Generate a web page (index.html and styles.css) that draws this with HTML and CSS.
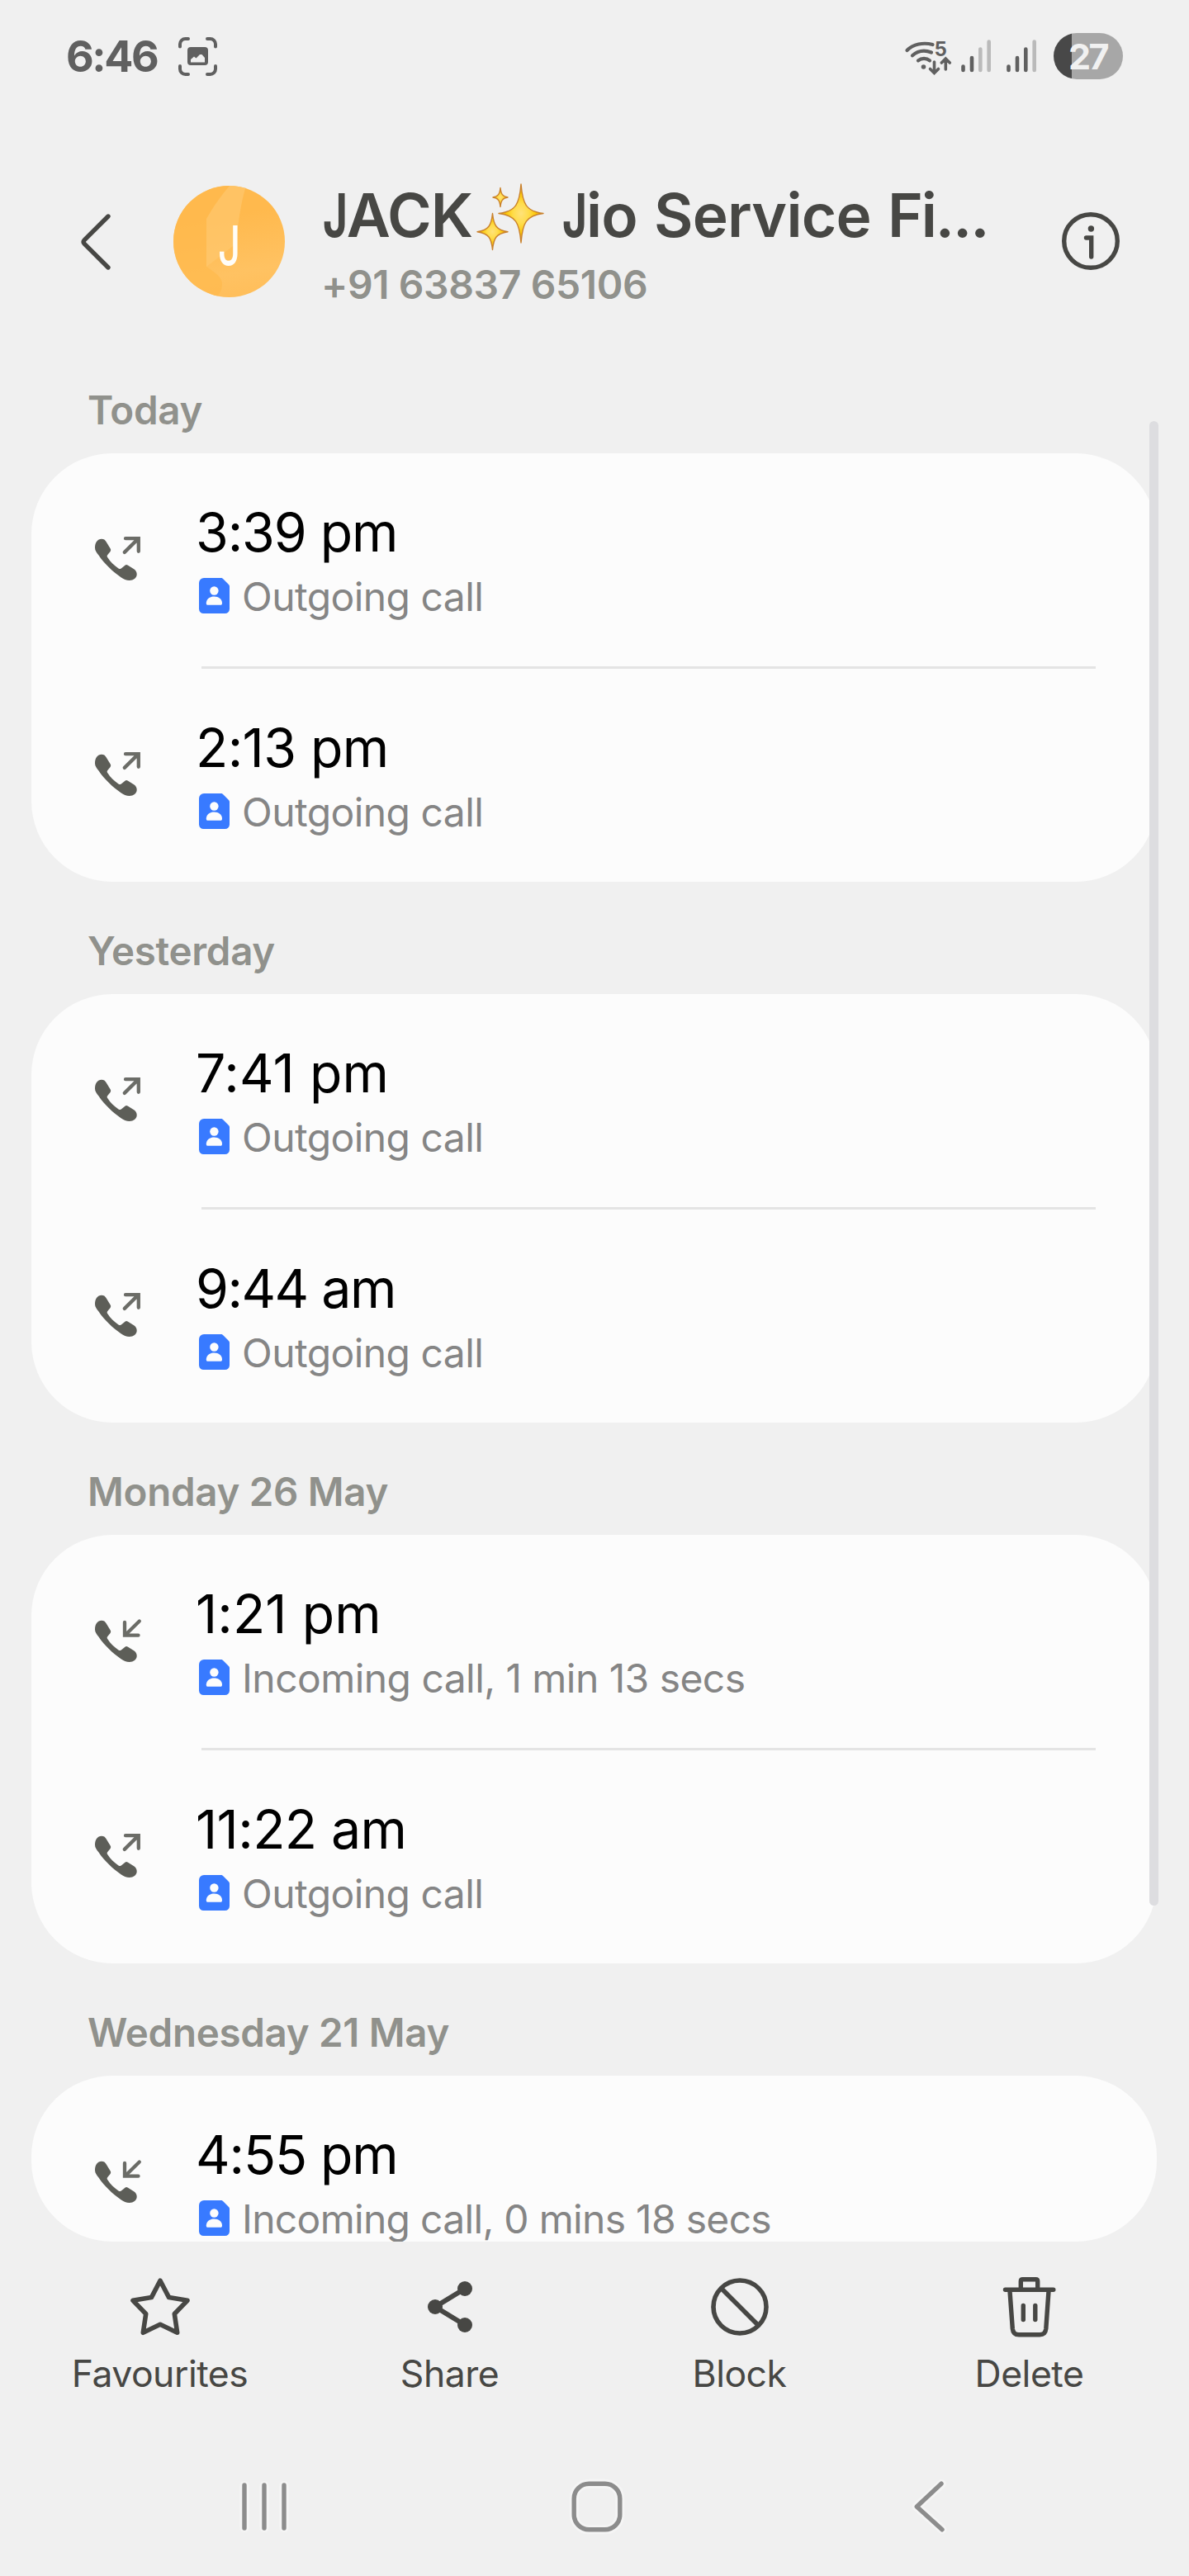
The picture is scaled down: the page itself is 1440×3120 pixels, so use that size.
FILE: index.html
```html
<!DOCTYPE html>
<html lang="en">
<head>
<meta charset="utf-8">
<title>Call history</title>
<link rel="stylesheet" href="styles.css">
</head>
<body>
<svg class="sprite" aria-hidden="true">
  <symbol id="handset" viewBox="0 0 60 60">
    <path fill="#5d5e58" d="M3 17.500C3 11 6.200 6.700 11 6.700c2.600 0 4.400 1.200 5.500 3.300l5.200 8.600c.7 1.300.6 2.200-.1 3.300l-3.300 4c-.8 1.100-.8 2-.1 3.200 3.500 5.500 8 10 13.300 13.300 1.500.9 2.700.8 3.900-.3l4-3.400c1.100-.9 2-.9 3.200-.2l7.600 4.700c2.400 1.600 3.700 3.900 3.500 6.800C53.400 54 49.700 57 44.700 57c-3.600 0-7-1.400-10.200-3.700C25 46.700 14.500 37.200 7.500 26.600 5 23 3 21 3 17.500z"/>
  </symbol>
  <symbol id="outgoing" viewBox="0 0 60 60">
    <use href="#handset"/>
    <path fill="none" stroke="#6b6c67" stroke-width="4.300" stroke-linecap="round" stroke-linejoin="miter" d="M40 6.200H55.800V21.800M38.800 22.900L55 6.900"/>
  </symbol>
  <symbol id="incoming" viewBox="0 0 60 60">
    <use href="#handset"/>
    <path fill="none" stroke="#6b6c67" stroke-width="4.300" stroke-linecap="round" stroke-linejoin="miter" d="M39 9V24.700H55.500M40 24L56.800 7.500"/>
  </symbol>
  <symbol id="contact" viewBox="0 0 37 43">
    <path fill="#387aff" d="M6 0H26.500c1.200 0 2 .4 2.800 1.200L36 8c.7.700 1 1.400 1 2.400V37.500a5.500 5.500 0 0 1-5.500 5.500H5.500A5.500 5.500 0 0 1 0 37.500V6A6 6 0 0 1 6 0z"/>
    <circle cx="18.400" cy="15.500" r="5.200" fill="#fcfcfc"/>
    <path fill="#fcfcfc" d="M8.800 30.500C8.800 25.500 13 22.500 18.400 22.500S28 25.500 28 30.500c0 1.500-.6 2.300-2 2.300H10.800c-1.400 0-2-.8-2-2.300z"/>
  </symbol>
</svg>

<div class="screen">
  <div class="status">
    <span class="clock">6:46</span>
    <svg class="capture" viewBox="0 0 47 47">
      <g fill="none" stroke="#606060" stroke-width="4" stroke-linecap="round">
        <path d="M2 11.500V8.500A6.500 6.500 0 0 1 8.500 2H12M35 2h3.500A6.500 6.500 0 0 1 45 8.500v3M45 35v3.500A6.500 6.500 0 0 1 38.500 45H35M12 45H8.500A6.500 6.500 0 0 1 2 38.500V35"/>
      </g>
      <path fill="#606060" fill-rule="evenodd" d="M15 12H32a4 4 0 0 1 4 4V30a4 4 0 0 1-4 4H15a4 4 0 0 1-4-4V16a4 4 0 0 1 4-4zM15 30.500H32V25l-3.500-4h-2.500l-4.500 4.500-2.500-2L15 27z"/>
    </svg>
    <div class="indicators">
      <svg class="wifi" viewBox="0 0 70 70">
        <g fill="none" stroke="#606060" stroke-width="4.200" stroke-linecap="round">
          <path d="M9.500 31C17 23.500 29 21 40.500 24"/>
          <path d="M16 37.300C22.500 31.500 31 30.500 39 33.500"/>
          <path d="M23 43.300C27 40 33 40 37 43.300"/>
          <path d="M42.500 45V58M37.500 53.500L42.500 58.500 47.500 53.500M56.300 54V42M51.300 46L56.300 41 61.300 46" stroke-width="3.600"/>
        </g>
        <circle cx="29.500" cy="51" r="2.800" fill="#606060"/>
        <text class="wifi-gen" x="42.500" y="38">5</text>
      </svg>
      <svg class="signal" viewBox="0 0 37 40">
        <g stroke-width="4.600" stroke-linecap="round">
          <path stroke="#606060" d="M2.500 32.500V37M13 22V37"/>
          <path stroke="#bababa" d="M23.300 11.500V37M33.700 2.500V37"/>
        </g>
      </svg>
      <svg class="signal signal-second" viewBox="0 0 37 40">
        <g stroke-width="4.600" stroke-linecap="round">
          <path stroke="#606060" d="M2.500 32.500V37M13 22V37M23.300 11.500V37"/>
          <path stroke="#bababa" d="M33.700 2.500V37"/>
        </g>
      </svg>
      <div class="battery">27</div>
    </div>
  </div>

  <header class="header">
    <svg class="back" viewBox="0 0 40 72"><path fill="none" stroke="#474744" stroke-width="5.400" stroke-linecap="round" d="M35 5L6.300 33.500Q4 36 6.300 38.500L35 67"/></svg>
    <div class="avatar">
      <svg class="avatar-art" viewBox="0 0 135 135">
        <path fill="#ffb94e" d="M0 0H68C56 14 48 26 40 40V98C52 106 58 110 59 118 59 126 57 130 52 135H0z" opacity=".75"/>
        <path fill="#ffc86e" d="M68 0H88C82 20 78 45 76 70L40 98V40C48 26 56 14 68 0z" opacity=".7"/>
      </svg>
      <span class="avatar-letter">J</span>
    </div>
    <div class="who">
      <h1 class="name">
        <span class="w-jack"><span class="j">J</span>ACK</span>
        <svg class="sparkles" viewBox="0 0 82 82" role="img" aria-label="sparkles">
          <defs>
            <radialGradient id="gold"><stop offset="0" stop-color="#ffe27a"/><stop offset=".35" stop-color="#ffdc4a"/><stop offset=".7" stop-color="#fbc400"/><stop offset="1" stop-color="#eda600"/></radialGradient>
          </defs>
          <g fill="url(#gold)" stroke="#c9812c" stroke-width="1.400" stroke-linejoin="round">
            <path d="M54 1C56 25 60 34 81 36.500 60 39 56 48 54 72 52 48 48 39 27 36.500 48 34 52 25 54 1z"/>
            <path d="M19.500 36.500C21 51 24 56.500 38 58.700 24 61 21 66 19.500 80.500 18 66 15 61 1 58.700 15 56.500 18 51 19.500 36.500z"/>
            <path d="M29 5.500C29.800 13 31.500 16 38 17 31.500 18 29.800 21 29 28.500 28.200 21 26.500 18 20 17 26.500 16 28.200 13 29 5.500z"/>
          </g>
        </svg>
        <span class="w-jio"><span class="j">J</span>io</span>
        <span class="w-service">Service</span>
        <span class="w-fi">Fi...</span>
      </h1>
      <div class="number">+91 63837 65106</div>
    </div>
    <svg class="info" viewBox="0 0 72 72">
      <g fill="none" stroke="#474744" stroke-linecap="round">
        <circle cx="36" cy="36" r="32.300" stroke-width="5.400"/>
        <path d="M30.500 32H36.700V55" stroke-width="5.400"/>
      </g>
      <circle cx="36.400" cy="21" r="3.700" fill="#474744"/>
    </svg>
  </header>

  <main class="log">
    <section class="day">
      <h2 class="day-title">Today</h2>
      <div class="card">
        <div class="call"><svg class="call-icon"><use href="#outgoing"/></svg><div class="call-text"><div class="time">3:39 pm</div><div class="detail"><svg class="contact"><use href="#contact"/></svg>Outgoing call</div></div></div>
        <div class="call"><svg class="call-icon"><use href="#outgoing"/></svg><div class="call-text"><div class="time time-semi">2:13 pm</div><div class="detail"><svg class="contact"><use href="#contact"/></svg>Outgoing call</div></div></div>
      </div>
    </section>
    <section class="day">
      <h2 class="day-title">Yesterday</h2>
      <div class="card">
        <div class="call"><svg class="call-icon"><use href="#outgoing"/></svg><div class="call-text"><div class="time time-loose">7:41 pm</div><div class="detail"><svg class="contact"><use href="#contact"/></svg>Outgoing call</div></div></div>
        <div class="call"><svg class="call-icon"><use href="#outgoing"/></svg><div class="call-text"><div class="time time-tight">9:44 am</div><div class="detail"><svg class="contact"><use href="#contact"/></svg>Outgoing call</div></div></div>
      </div>
    </section>
    <section class="day">
      <h2 class="day-title">Monday 26 May</h2>
      <div class="card">
        <div class="call"><svg class="call-icon"><use href="#incoming"/></svg><div class="call-text"><div class="time time-loose">1:21 pm</div><div class="detail"><svg class="contact"><use href="#contact"/></svg>Incoming call, 1 min 13 secs</div></div></div>
        <div class="call"><svg class="call-icon"><use href="#outgoing"/></svg><div class="call-text"><div class="time time-semi">11:22 am</div><div class="detail"><svg class="contact"><use href="#contact"/></svg>Outgoing call</div></div></div>
      </div>
    </section>
    <section class="day">
      <h2 class="day-title">Wednesday 21 May</h2>
      <div class="card card-cut">
        <div class="call"><svg class="call-icon"><use href="#incoming"/></svg><div class="call-text"><div class="time">4:55 pm</div><div class="detail detail-tight"><svg class="contact"><use href="#contact"/></svg>Incoming call, 0 mins 18 secs</div></div></div>
      </div>
    </section>
    <div class="scrollbar"></div>
  </main>

  <footer class="actions">
    <div class="action">
      <svg class="action-icon" viewBox="0 0 80 80"><path fill="none" stroke="#474744" stroke-width="5.600" stroke-linejoin="round" d="M40 8.200L50.600 28.600 73 32.300 57.300 48.500 60.700 71.300 40 61.300 19.300 71.300 22.700 48.500 7 32.300 29.400 28.600z"/></svg>
      <span>Favourites</span>
    </div>
    <div class="action">
      <svg class="action-icon" viewBox="0 0 80 80"><path fill="none" stroke="#474744" stroke-width="6" d="M58 18L22 40 58 62"/><g fill="#474744"><circle cx="22" cy="40" r="9"/><circle cx="58" cy="18" r="9"/><circle cx="58" cy="62" r="9"/></g></svg>
      <span>Share</span>
    </div>
    <div class="action">
      <svg class="action-icon" viewBox="0 0 80 80"><g fill="none" stroke="#474744" stroke-width="5.600"><circle cx="40" cy="40" r="32"/><path d="M17.500 17.500L62.500 62.500"/></g></svg>
      <span>Block</span>
    </div>
    <div class="action">
      <svg class="action-icon" viewBox="0 0 80 80"><g fill="none" stroke="#474744" stroke-width="5.400" stroke-linecap="round" stroke-linejoin="round"><path d="M10.500 19.300H68.800M29.300 19V9Q29.300 6.800 31.500 6.800H47.500Q49.700 6.800 49.700 9V19M16 21L19.300 66.500Q20 73.800 27 73.800H52.200Q59 73.800 59.800 66.500L63 21M32.300 38.500V55.500M46.800 38.500V55.500"/></g></svg>
      <span>Delete</span>
    </div>
  </footer>

  <nav class="nav">
    <svg class="nav-icon" viewBox="0 0 72 72"><path class="halo" d="M12 10.500V61.500M36 10.500V61.500M60 10.500V61.500"/><path class="ink" d="M12 10V62M36 10V62M60 10V62"/></svg>
    <svg class="nav-icon" viewBox="0 0 72 72"><rect class="halo" x="8.200" y="8.200" width="55.600" height="55.600" rx="18"/><rect class="ink" x="8.200" y="8.200" width="55.600" height="55.600" rx="18"/></svg>
    <svg class="nav-icon" viewBox="0 0 72 72"><path class="halo" d="M51.500 8.500L21 36 52 63.500"/><path class="ink" d="M51 8.200L21.300 36 52 63.800"/></svg>
  </nav>
</div>
</body>
</html>
```
FILE: styles.css
```css
* { box-sizing: border-box; }

body {
  margin: 0;
  background: #f0f0f0;
  font-family: "Inter", "Liberation Sans", sans-serif;
}

.sprite { position: absolute; width: 0; height: 0; }

.screen {
  position: relative;
  display: flex;
  flex-direction: column;
  width: 1440px;
  height: 3120px;
  overflow: hidden;
  background: #f0f0f0;
}

/* status bar */
.status {
  display: flex;
  align-items: center;
  height: 136px;
  padding: 0 80px;
}

.clock {
  width: 136px;
  font-size: 52px;
  font-weight: 700;
  letter-spacing: -2.4px;
  color: #606060;
}

.capture { width: 47px; height: 47px; }

.indicators { display: flex; align-items: center; margin-left: auto; }
.wifi { width: 70px; height: 70px; margin-top: -6px; }
.wifi-gen { font-size: 24px; font-weight: 700; fill: #606060; }
.signal { width: 37px; height: 40px; margin-left: 5px; }
.signal-second { margin-left: 18px; }

.battery {
  width: 84px;
  height: 56px;
  margin-left: 20px;
  padding-left: 18px;
  border-radius: 28px;
  background: linear-gradient(90deg, #484848 22.5px, #a7a7a7 22.5px);
  color: #f1f1f1;
  font-size: 43px;
  font-weight: 700;
  line-height: 56px;
  letter-spacing: -2.5px;
}

/* contact header */
.header {
  display: flex;
  height: 277px;
  padding: 0 83px 0 96px;
}

.back { width: 40px; height: 72px; margin-top: 121px; }

.avatar {
  position: relative;
  width: 135px;
  height: 135px;
  margin: 89px 46px 0 74px;
  border-radius: 50%;
  overflow: hidden;
  background: linear-gradient(170deg, #ffb94d 30%, #ffc262 75%, #ffbd58);
}

.avatar-art { display: block; width: 135px; height: 135px; }

.avatar-letter {
  position: absolute;
  left: 54px;
  top: 32px;
  font-size: 66px;
  line-height: 80px;
  font-weight: 500;
  color: #fffdf8;
  transform: scaleX(0.72);
  transform-origin: 0 50%;
}

.who { width: 894px; margin-top: 81px; }

.name {
  display: flex;
  margin: 0;
  font-size: 73px;
  font-weight: 600;
  line-height: 88px;
  letter-spacing: -0.8px;
  color: #474744;
}

.j {
  display: inline-block;
  margin-right: -13px;
  font-weight: 700;
  transform: scaleX(0.7);
  transform-origin: 0 50%;
}

.w-jack { width: 186px; letter-spacing: -1px; }
.sparkles { width: 82px; height: 82px; margin-top: 5px; }
.w-jio { width: 111px; margin-left: 22px; }
.w-service { width: 283px; }
.w-fi { letter-spacing: -2.1px; }

.number {
  margin: 11px 0 0 -2px;
  font-size: 48px;
  font-weight: 600;
  line-height: 58px;
  letter-spacing: -0.4px;
  color: #90918c;
}

.info { width: 72px; height: 72px; margin: 120px 0 0 auto; }

/* call log */
.log {
  position: relative;
  height: 2302px;
  overflow: hidden;
}

.day-title {
  height: 136px;
  margin: 0;
  padding: 55px 106px 0;
  font-size: 47.500px;
  font-weight: 600;
  line-height: 58px;
  letter-spacing: -0.3px;
  color: #90918c;
}

.card {
  width: 1363px;
  height: 519px;
  margin-left: 38px;
  border-radius: 98px;
  background: #fcfcfc;
  overflow: hidden;
}

.card-cut { height: 201px; }

.call {
  position: relative;
  display: flex;
  height: 261px;
  padding: 57px 0 0 74px;
}

.call + .call::before {
  content: "";
  position: absolute;
  top: -3px;
  left: 206px;
  width: 1083px;
  height: 3px;
  background: #e4e4e4;
}

.call-icon { width: 60px; height: 60px; margin-top: 40px; }
.call-text { margin-left: 65px; }

.time {
  font-size: 64.400px;
  line-height: 78px;
  letter-spacing: -1.1px;
  white-space: nowrap;
  color: #000;
}

.time-tight { letter-spacing: -1.500px; }
.time-semi { letter-spacing: -0.600px; }
.time-loose { letter-spacing: 0.1px; }

.detail {
  display: flex;
  margin: 10px 0 0 4px;
  font-size: 48px;
  line-height: 58px;
  letter-spacing: -0.56px;
  white-space: nowrap;
  color: #858585;
}

.detail-tight { letter-spacing: -0.7px; }

.contact { width: 37px; height: 43px; margin: 6px 15px 0 0; }

.scrollbar {
  position: absolute;
  top: 97px;
  left: 1392px;
  width: 11px;
  height: 1798px;
  border-radius: 6px;
  background: #dddde0;
}

/* bottom actions */
.actions {
  display: grid;
  grid-template-columns: repeat(4, 351px);
  margin-left: 18px;
  padding-top: 39px;
  height: 237px;
}

.action {
  display: flex;
  flex-direction: column;
  align-items: center;
  gap: 14px;
  font-size: 44.500px;
  line-height: 54px;
  letter-spacing: -0.5px;
  color: #474744;
}

.action-icon { width: 80px; height: 80px; }

/* system navigation */
.nav {
  display: grid;
  grid-template-columns: repeat(3, 402.500px);
  justify-items: center;
  margin-left: 119px;
  padding-top: 48px;
}

.nav-icon { width: 72px; height: 72px; overflow: visible; }
.halo, .ink { fill: none; stroke-linecap: round; stroke-linejoin: round; }
.halo { stroke: #f5f5f5; stroke-width: 11px; }
.ink { stroke: #8c8c8c; stroke-width: 5.400px; }
```
